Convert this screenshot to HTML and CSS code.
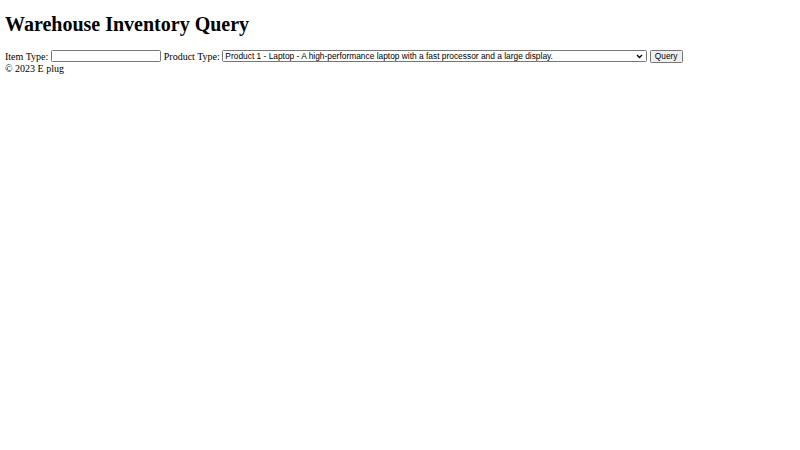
FILE: index.html
```html
<!DOCTYPE html>
<html>
<head>
<meta charset="utf-8">
<link rel="stylesheet" href="styles.css">
</head>
<body class="page">
<h1 class="title">Warehouse Inventory Query</h1>
<form class="query-form">
<label class="lbl">Item Type:</label> <input class="item-input" type="text"> <label class="lbl">Product Type:</label> <span class="select-wrap"><select class="product-select"><option>Product 1 - Laptop - A high-performance laptop with a fast processor and a large display.</option></select><svg class="chevron" viewBox="0 0 8 6" width="7" height="5"><path d="M1 1.2 L4 4.2 L7 1.2" fill="none" stroke="#000" stroke-width="1.6"/></svg></span> <button class="query-btn" type="button">Query</button>
</form>
<div class="footer">© 2023 E plug</div>
</body>
</html>
```
FILE: styles.css
```css
html { background: #fff; }
.page {
  margin: 5px;
  font-family: "Liberation Serif", "Times New Roman", serif;
  font-size: 10px;
  color: #000;
}
.title {
  font-size: 20px;
  font-weight: bold;
  margin: 8.4px 0 13.4px;
}
.query-form { margin: 0; }
.item-input {
  font: 8.33px "Liberation Sans", Arial, sans-serif;
  width: 106px;
  height: 9px;
  padding: 0.6px 1.25px;
  border: 1.25px solid #767676;
  border-radius: 1.5px;
  vertical-align: baseline;
}
.select-wrap {
  position: relative;
  display: inline-block;
}
.product-select {
  -webkit-appearance: none;
  appearance: none;
  font: 8.4px "Liberation Sans", Arial, sans-serif;
  width: 425px;
  height: 12px;
  padding: 0 0 0 2px;
  border: 1px solid #767676;
  border-radius: 1.5px;
  background: #fff;
  color: #000;
}
.chevron {
  position: absolute;
  right: 4px;
  top: 4px;
  pointer-events: none;
}
.query-btn {
  font: 8.33px "Liberation Sans", Arial, sans-serif;
  padding: 0.6px 4px;
  border: 1px solid #767676;
  border-radius: 1.5px;
  background: #efefef;
  color: #000;
}
```
